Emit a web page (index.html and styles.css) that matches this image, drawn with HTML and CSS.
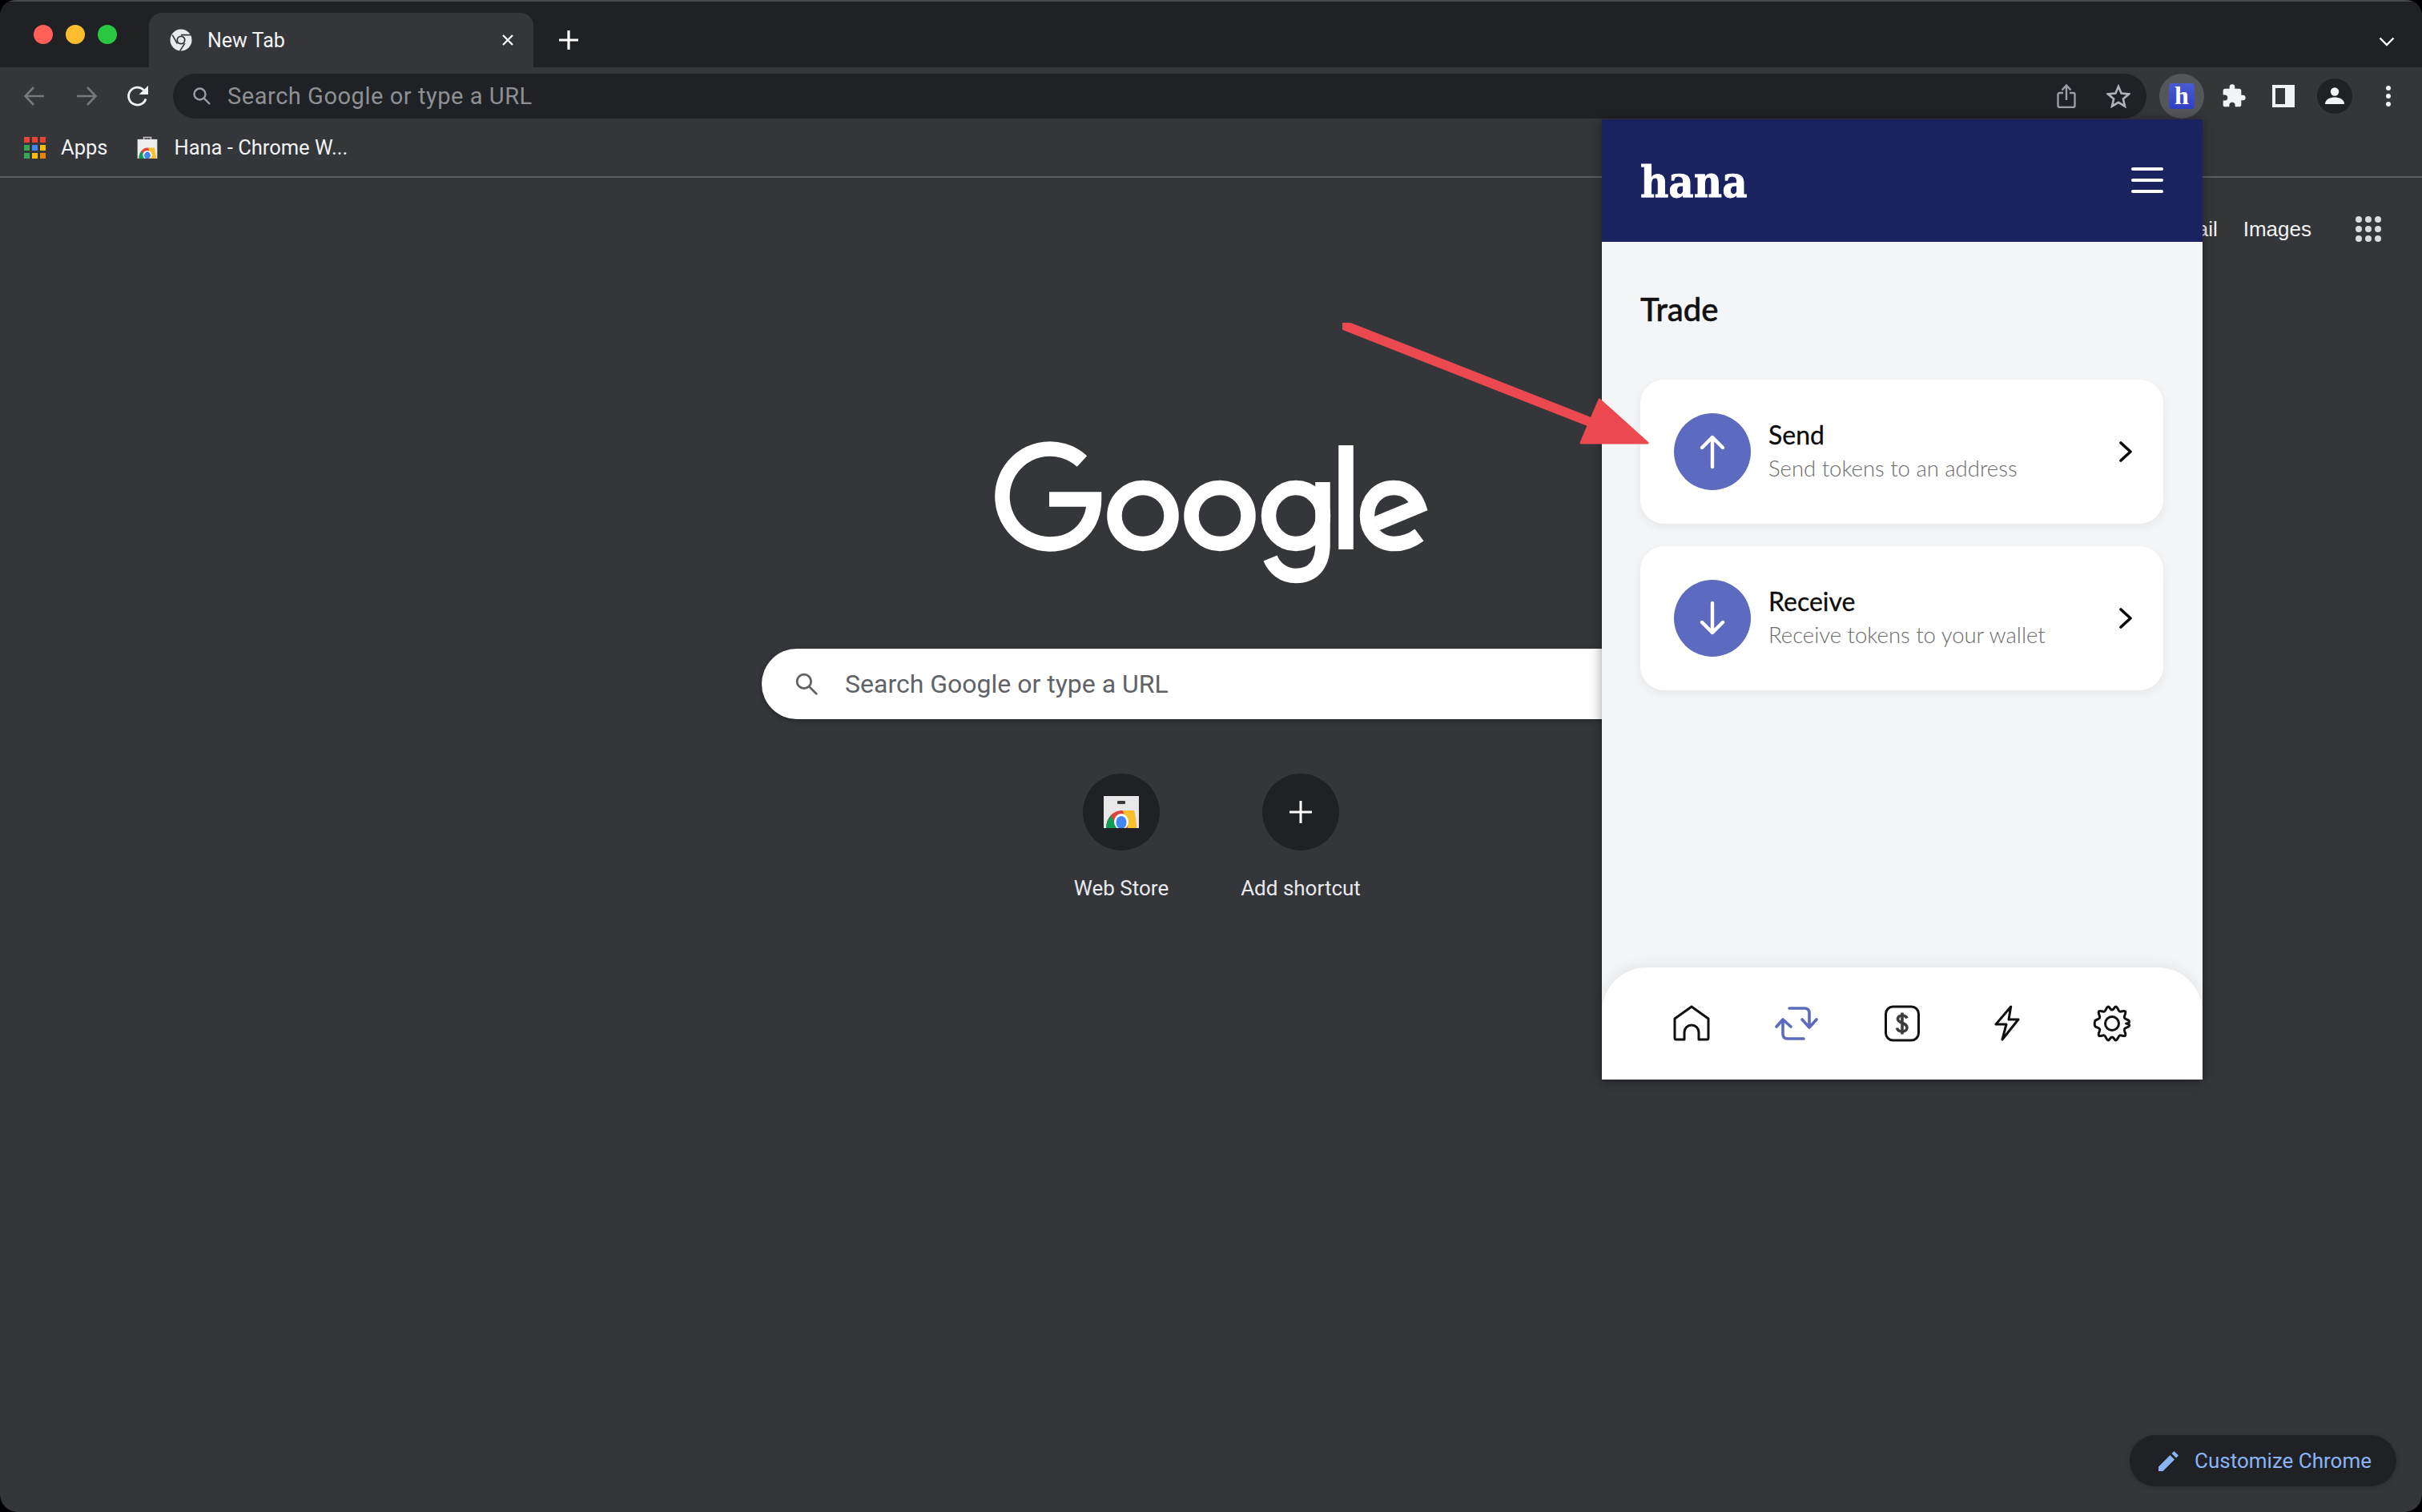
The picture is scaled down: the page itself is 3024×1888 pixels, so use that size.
FILE: index.html
```html
<!DOCTYPE html>
<html lang="en">
<head>
<meta charset="utf-8">
<title>New Tab</title>
<link rel="stylesheet" href="styles.css">
</head>
<body>
<div class="window">
  <header class="tabstrip">
    <div class="lights"><span class="light red"></span><span class="light yellow"></span><span class="light green"></span></div>
    <div class="tab">
      <svg class="tab-icon" viewBox="0 0 28 28"><circle cx="14" cy="14" r="13.5" fill="#e8eaed"/><circle cx="14" cy="14" r="5.6" fill="#35363a"/><circle cx="14" cy="14" r="3.8" fill="#e8eaed"/><path d="M14 7.6H26M9.4 18.6 3.2 7.6M18.8 18 12.6 27.6" stroke="#35363a" stroke-width="1.6" fill="none"/></svg>
      <span class="tab-title">New Tab</span>
      <svg class="tab-close" viewBox="0 0 16 16"><path d="M2 2 14 14M14 2 2 14" stroke="#fff" stroke-width="2.2"/></svg>
    </div>
    <svg class="new-tab" viewBox="0 0 24 24"><path d="M12 0V24M0 12H24" stroke="#fff" stroke-width="3.2"/></svg>
    <svg class="tab-menu" viewBox="0 0 20 12"><path d="M1.5 1.5 10 10 18.5 1.5" fill="none" stroke="#fff" stroke-width="2.4"/></svg>
  </header>
  <div class="toolbar">
    <svg class="nav-ico" viewBox="0 0 28 28"><path d="M26 14H3M13 3 2.5 14 13 25" fill="none" stroke="#77787b" stroke-width="2.6"/></svg>
    <svg class="nav-ico" viewBox="0 0 28 28"><path d="M2 14H25M15 3 25.5 14 15 25" fill="none" stroke="#77787b" stroke-width="2.6"/></svg>
    <svg class="nav-ico" viewBox="0 0 28 28"><path d="M24 17.5A11 11 0 1 1 21.5 6.5" fill="none" stroke="#f1f3f4" stroke-width="2.8"/><path d="M15.5 12H27V1Z" fill="#f1f3f4"/></svg>
    <div class="omnibox">
      <svg class="omni-search" viewBox="0 0 24 24"><circle cx="9.5" cy="9.5" r="7" fill="none" stroke="#9aa0a6" stroke-width="2.4"/><path d="M14.5 14.5 22 22" stroke="#9aa0a6" stroke-width="2.4"/></svg>
      <span class="omni-text">Search Google or type a URL</span>
      <svg class="omni-share" viewBox="0 0 24 30"><path d="M8 11H3.5A2 2 0 0 0 1.5 13V27A2 2 0 0 0 3.5 29H20.5A2 2 0 0 0 22.5 27V13A2 2 0 0 0 20.5 11H16" fill="none" stroke="#9aa0a6" stroke-width="2.4"/><path d="M12 20V2M6.5 7.5 12 1.5 17.5 7.5" fill="none" stroke="#9aa0a6" stroke-width="2.4"/></svg>
      <svg class="omni-star" viewBox="0 0 30 30"><path d="M15 3 18.6 11.6 28 12.4 20.9 18.5 23 27.7 15 22.8 7 27.7 9.1 18.5 2 12.4 11.4 11.6Z" fill="none" stroke="#b0b3b8" stroke-width="2.6"/></svg>
    </div>
    <div class="ext-btn"><span class="ext-h">h</span></div>
    <svg class="puzzle" viewBox="0 0 24 24"><path d="M20.5 11H19V7a2 2 0 0 0-2-2h-4V3.5a2.5 2.5 0 0 0-5 0V5H4a2 2 0 0 0-2 2v3.8h1.5a2.7 2.7 0 0 1 0 5.4H2V20a2 2 0 0 0 2 2h3.8v-1.5a2.7 2.7 0 0 1 5.4 0V22H17a2 2 0 0 0 2-2v-4h1.5a2.5 2.5 0 0 0 0-5z" fill="#f1f3f4"/></svg>
    <div class="panel-ico"><span class="panel-hole"></span></div>
    <div class="avatar"><svg viewBox="0 0 24 24"><circle cx="12" cy="6.5" r="5.2" fill="#f1f3f4"/><path d="M0 22C0 15.5 7 13.5 12 13.5S24 15.5 24 22Z" fill="#f1f3f4"/></svg></div>
    <div class="kebab"><span></span><span></span><span></span></div>
  </div>
  <nav class="bookmarks">
    <svg class="bm-apps" viewBox="0 0 27 27"><g fill="#ea4335"><rect width="7" height="7"/><rect x="10" width="7" height="7"/><rect x="20" width="7" height="7"/></g><rect y="10" width="7" height="7" fill="#34a853"/><rect x="10" y="10" width="7" height="7" fill="#4285f4"/><rect x="20" y="10" width="7" height="7" fill="#fbbc04"/><rect y="20" width="7" height="7" fill="#34a853"/><rect x="10" y="20" width="7" height="7" fill="#fbbc04"/><rect x="20" y="20" width="7" height="7" fill="#ea8600"/></svg>
    <span class="bm-label apps-label">Apps</span>
    <svg class="bm-store" viewBox="0 0 44 50"><path d="M14 8V3H30V8" fill="none" stroke="#bdbdbd" stroke-width="3"/><rect y="7" width="44" height="43" fill="#eeeeee"/><path d="M3 50A19 24 0 0 1 41 50Z" fill="#db4437"/><path d="M3 50A19 24 0 0 1 9 33L17 50Z" fill="#0f9d58"/><path d="M24 26H38Q41 38 41 50H30Z" fill="#fbc02d"/><ellipse cx="22" cy="42" rx="10" ry="10" fill="#fff"/><ellipse cx="22" cy="43" rx="7" ry="8" fill="#4285f4"/></svg>
    <span class="bm-label">Hana - Chrome W...</span>
  </nav>
  <main class="ntp">
    <div class="ntp-links"><span class="ntp-link gmail">Gmail</span><span class="ntp-link">Images</span>
      <div class="grid-dots"><span></span><span></span><span></span><span></span><span></span><span></span><span></span><span></span><span></span></div>
    </div>
    <svg class="logo" viewBox="1230 540 560 200" role="img" aria-label="Google">
      <g fill="none" stroke="#fff" stroke-width="18.5">
        <path d="M1351 576A59.5 59.5 0 1 0 1310 679.5C1345 679.5 1366 655 1366 623.5H1310"/>
        <ellipse cx="1427" cy="644" rx="35.5" ry="35"/>
        <ellipse cx="1523" cy="644" rx="35.5" ry="35"/>
        <ellipse cx="1618" cy="644" rx="34" ry="35"/>
        <path d="M1651.5 602V680C1651.5 706 1638 719 1618 719C1602 719 1591 709 1586 697"/>
        <path d="M1680.5 556V686"/>
        <path d="M1772 668C1764 674 1754 679 1741 679C1720 679 1707 663 1707 644C1707 624 1721 609 1740 609C1757 609 1767 620 1771 632L1718 654"/>
      </g>
    </svg>
    <div class="searchbox">
      <svg class="sb-icon" viewBox="0 0 24 24"><circle cx="9.5" cy="9.5" r="7" fill="none" stroke="#5f6368" stroke-width="2.2"/><path d="M14.5 14.5 22.5 22.5" stroke="#5f6368" stroke-width="2.2"/></svg>
      <span class="sb-text">Search Google or type a URL</span>
    </div>
    <div class="shortcuts">
      <div class="shortcut">
        <div class="sc-circle"><svg class="sc-store" viewBox="0 0 44 40"><rect width="44" height="40" fill="#e8e8e8"/><rect x="17" y="6" width="10" height="4" rx="1" fill="#3c3c3c"/><path d="M3 40A19 22 0 0 1 41 40Z" fill="#db4437"/><path d="M3 40A19 22 0 0 1 9 24L17 40Z" fill="#0f9d58"/><path d="M24 18H38Q41 28 41 40H30Z" fill="#fbc02d"/><ellipse cx="22" cy="32" rx="9" ry="10" fill="#fff"/><ellipse cx="22" cy="33" rx="6.5" ry="8" fill="#4285f4"/></svg></div>
        <span class="sc-label">Web Store</span>
      </div>
      <div class="shortcut">
        <div class="sc-circle"><svg class="sc-plus" viewBox="0 0 28 28"><path d="M14 0V28M0 14H28" stroke="#fff" stroke-width="3"/></svg></div>
        <span class="sc-label">Add shortcut</span>
      </div>
    </div>
    <div class="customize">
      <svg class="pencil" viewBox="0 0 25 25"><path d="M0 19.5 14.5 5 20 10.5 5.5 25H0ZM16.5 3 19.5 0 25 5.5 22 8.5Z" fill="#8ab4f8"/></svg>
      <span>Customize Chrome</span>
    </div>
  </main>
</div>

<section class="popup">
  <header class="popup-head">
    <span class="brand">hana</span>
    <div class="burger"><span></span><span></span><span></span></div>
  </header>
  <div class="popup-body">
    <h1 class="trade">Trade</h1>
    <div class="cards">
      <div class="card">
        <div class="card-circle"><svg viewBox="0 0 34 44"><path d="M17 41V4M4 17 17 4 30 17" fill="none" stroke="#fff" stroke-width="4.4" stroke-linecap="round" stroke-linejoin="round"/></svg></div>
        <div class="card-text"><span class="card-title">Send</span><span class="card-sub">Send tokens to an address</span></div>
        <svg class="chev" viewBox="0 0 16 26"><path d="M2 2 14 13 2 24" fill="none" stroke="#0b0b0b" stroke-width="3.6" stroke-linecap="round" stroke-linejoin="round"/></svg>
      </div>
      <div class="card">
        <div class="card-circle"><svg viewBox="0 0 34 44"><path d="M17 3V40M4 27 17 40 30 27" fill="none" stroke="#fff" stroke-width="4.4" stroke-linecap="round" stroke-linejoin="round"/></svg></div>
        <div class="card-text"><span class="card-title">Receive</span><span class="card-sub">Receive tokens to your wallet</span></div>
        <svg class="chev" viewBox="0 0 16 26"><path d="M2 2 14 13 2 24" fill="none" stroke="#0b0b0b" stroke-width="3.6" stroke-linecap="round" stroke-linejoin="round"/></svg>
      </div>
    </div>
  </div>
  <footer class="tabbar">
    <svg class="tb-ico" viewBox="0 0 48 48"><path d="M24 3 45 18V42Q45 44 43 44H33V35A9 9 0 0 0 15 35V44H5Q3 44 3 42V18Z" fill="none" stroke="#111" stroke-width="3" stroke-linejoin="round"/></svg>
    <svg class="tb-swap" viewBox="0 0 56 48"><path d="M19 5H38Q44 5 44 11V29M35 19 44 29 53 19M37 43H17Q11 43 11 37V19M3 28 11 19 21 28" fill="none" stroke="#5c6bc0" stroke-width="3.6" stroke-linecap="round" stroke-linejoin="round"/></svg>
    <svg class="tb-ico" viewBox="0 0 48 48"><rect x="3.5" y="3" width="41" height="42" rx="9" fill="none" stroke="#111" stroke-width="3"/><path d="M30 17.5C29 15 27 14 24 14 20.5 14 18.5 16 18.5 18.5 18.5 24 30 22.5 30 29 30 32 27.5 34 24 34 20.5 34 18 32 17.5 29.5M24 10.5V37.5" fill="none" stroke="#3c3c3c" stroke-width="3.6"/></svg>
    <svg class="tb-ico" viewBox="0 0 48 48"><path d="M28.7 3 10 25H23L18 44 38 19H26Z" fill="none" stroke="#111" stroke-width="3" stroke-linejoin="round"/></svg>
    <svg class="tb-ico" viewBox="0 0 48 48"><circle cx="24" cy="24" r="8.5" fill="none" stroke="#111" stroke-width="3"/><path d="M19.5 3C21 3 21.5 7 24 7S27 3 28.5 3C31 3 31.5 8 33.5 9S39 7 40.5 9C42 11 38.5 14.5 39.5 17S45 18.5 45.5 21.5C46 24 41.5 24 41.5 24S46 24.5 45.5 26.5C45 29.5 40.5 28.5 39.5 31S42 37 40.5 39C39 41 35.5 38 33.5 39S31 45 28.5 45C27 45 26.5 41 24 41S21 45 19.5 45C17 45 16.5 40 14.5 39S9 41 7.5 39C6 37 9.5 33.5 8.5 31S3 29.5 2.5 26.5C2 24.5 2 23.5 2.5 21.5C3 18.5 7.5 19.5 8.5 17S6 11 7.5 9C9 7 12.5 10 14.5 9S17 3 19.5 3Z" fill="none" stroke="#111" stroke-width="3" stroke-linejoin="round"/></svg>
  </footer>
</section>

<svg class="arrow" viewBox="0 0 400 170"><path d="M4 4 317 127" stroke="#ec4850" stroke-width="12" stroke-linecap="round"/><path d="M321 96 381 150 298 150Z" fill="#ec4850" stroke="#ec4850" stroke-width="3" stroke-linejoin="round"/></svg>
</body>
</html>
```
FILE: styles.css
```css
* { box-sizing: border-box; }
html, body { margin: 0; padding: 0; background: #000; }
body { width: 3024px; height: 1888px; overflow: hidden; position: relative; font-family: Roboto, "Liberation Sans", sans-serif; }
.window { width: 3024px; height: 1888px; display: flex; flex-direction: column; background: #35363a; border-radius: 20px 20px 22px 22px; overflow: hidden; }

.tabstrip { height: 84px; flex: none; background: #202124; border-top: 2px solid #46474b; display: flex; align-items: flex-start; padding: 14px 34px 0 42px; }
.lights { display: flex; gap: 16px; width: 144px; padding-top: 15px; flex: none; }
.light { width: 24px; height: 24px; border-radius: 50%; }
.red { background: #ff5f57; } .yellow { background: #febc2e; } .green { background: #28c840; }
.tab { width: 480px; height: 68px; background: #35363a; border-radius: 16px 16px 0 0; display: flex; align-items: center; padding: 0 24px 0 26px; flex: none; }
.tab-icon { width: 28px; height: 28px; margin-right: 19px; }
.tab-title { color: #f1f3f4; font-size: 25px; flex: 1; }
.tab-close { width: 16px; height: 16px; }
.new-tab { width: 24px; height: 24px; margin: 22px 0 0 32px; }
.tab-menu { width: 20px; height: 12px; margin: 30px 0 0 auto; }

.toolbar { height: 72px; flex: none; display: flex; align-items: center; padding: 0 30px 0 29px; }
.nav-ico { width: 28px; height: 28px; margin-right: 37px; flex: none; }
.nav-ico:nth-child(2) { margin-right: 36px; }
.nav-ico:nth-child(3) { margin-right: 30px; }
.omnibox { width: 2464px; height: 56px; background: #202124; border-radius: 28px; display: flex; align-items: center; padding: 0 20px 0 24px; flex: none; }
.omni-search { width: 24px; height: 24px; margin-right: 20px; }
.omni-text { color: #8e9094; font-size: 29px; letter-spacing: .55px; flex: 1; }
.omni-share { width: 24px; height: 30px; margin-right: 38px; }
.omni-star { width: 30px; height: 30px; }
.ext-btn { width: 56px; height: 56px; border-radius: 50%; background: #55565a; display: flex; align-items: center; justify-content: center; margin-left: 16px; flex: none; }
.ext-h { width: 32px; height: 32px; border-radius: 4px; background: linear-gradient(#4a5bd0, #3040c4); color: #fff; font: bold 32px/30px "Liberation Serif", serif; text-align: center; }
.puzzle { width: 32px; height: 32px; margin-left: 21px; flex: none; }
.panel-ico { width: 28px; height: 28px; margin-left: 32px; background: #f1f3f4; padding: 4px 12px 4px 4px; flex: none; }
.panel-hole { display: block; height: 100%; background: #35363a; }
.avatar { width: 44px; height: 44px; border-radius: 50%; background: #202124; margin-left: 28px; display: flex; align-items: center; justify-content: center; flex: none; }
.avatar svg { width: 24px; height: 24px; }
.kebab { margin-left: 42px; display: flex; flex-direction: column; gap: 4px; flex: none; }
.kebab span { width: 6px; height: 6px; border-radius: 50%; background: #f1f3f4; }

.bookmarks { height: 66px; flex: none; display: flex; align-items: center; padding: 0 0 8px 30px; border-bottom: 2px solid #5d5e62; }
.bm-apps { width: 27px; height: 27px; margin-right: 19px; }
.bm-store { width: 26px; height: 28px; margin-right: 20px; }
.bm-label { color: #f1f3f4; font-size: 25.5px; }
.apps-label { margin-right: 37px; }

.ntp { flex: 1; display: flex; flex-direction: column; align-items: center; position: relative; }
.ntp-links { align-self: stretch; display: flex; justify-content: flex-end; align-items: center; height: 66px; margin-top: 31px; padding-right: 51px; }
.ntp-link { color: #f1f3f4; font: 26px "Liberation Sans", sans-serif; }
.gmail { margin-right: 32px; }
.grid-dots { display: grid; grid-template-columns: repeat(3, 8px); gap: 4px; margin-left: 55px; }
.grid-dots span { width: 8px; height: 8px; border-radius: 50%; background: #dadce0; }
.logo { width: 560px; height: 200px; margin: 221px 0 0 -4px; flex: none; }
.searchbox { width: 1120px; height: 88px; margin: 70px 0 0 -2px; border-radius: 44px; background: #fff; display: flex; align-items: center; padding-left: 41px; box-shadow: 0 2px 6px rgba(0,0,0,.28); flex: none; }
.sb-icon { width: 30px; height: 30px; margin-right: 33px; }
.sb-text { color: #5f6368; font-size: 32px; }
.shortcuts { display: flex; gap: 48px; margin-top: 68px; }
.shortcut { width: 176px; display: flex; flex-direction: column; align-items: center; }
.sc-circle { width: 96px; height: 96px; border-radius: 50%; background: #202124; display: flex; align-items: center; justify-content: center; }
.sc-store { width: 44px; height: 40px; }
.sc-plus { width: 28px; height: 28px; }
.sc-label { color: #e8eaed; font-size: 26px; margin-top: 32px; white-space: nowrap; }
.customize { position: absolute; right: 32px; bottom: 32px; height: 64px; width: 333px; border-radius: 32px; background: #202124; display: flex; align-items: center; padding-left: 36px; gap: 20px; color: #8ab4f8; font-size: 26px; box-shadow: 0 1px 6px rgba(0,0,0,.2); }
.pencil { width: 25px; height: 25px; }

.popup { position: absolute; left: 2000px; top: 149px; width: 750px; height: 1199px; background: #f4f5f7; display: flex; flex-direction: column; box-shadow: 0 2px 14px rgba(0,0,0,.4); }
.popup-head { height: 153px; flex: none; background: #1a2360; display: flex; align-items: center; justify-content: space-between; padding: 0 49px 0 48px; }
.brand { color: #fff; font: bold 54px/1 "DejaVu Serif Condensed", "DejaVu Serif", serif; font-stretch: condensed; -webkit-text-stroke: .8px #fff; margin-top: 2px; }
.burger { display: flex; flex-direction: column; gap: 10px; margin-top: -2px; }
.burger span { width: 40px; height: 4px; border-radius: 2px; background: #fff; }
.popup-body { flex: 1; padding: 57px 49px 0 48px; }
.trade { margin: 0; font: 500 40px/54px Lato, sans-serif; -webkit-text-stroke: .5px #111; color: #111; }
.cards { display: flex; flex-direction: column; gap: 28px; margin-top: 61px; }
.card { height: 180px; background: #fff; border-radius: 30px; display: flex; align-items: center; padding: 0 39px 0 42px; box-shadow: 0 4px 12px rgba(0,0,0,.06); }
.card-circle { width: 96px; height: 96px; border-radius: 50%; background: #5c6bc0; display: flex; align-items: center; justify-content: center; flex: none; }
.card-circle svg { width: 34px; height: 44px; }
.card-text { flex: 1; display: flex; flex-direction: column; margin-left: 22px; }
.card-title { font: 400 32px/40px Lato, sans-serif; -webkit-text-stroke: .3px #0b0b0b; color: #0b0b0b; margin-top: -2px; }
.card-sub { font: 300 27.5px/38px Lato, sans-serif; color: #6c6c6c; margin-top: 3px; }
.chev { width: 16px; height: 26px; flex: none; }
.tabbar { height: 140px; flex: none; background: #fff; border-radius: 56px 56px 0 0; display: flex; align-items: center; justify-content: space-between; padding: 0 89px 0 88px; box-shadow: 0 -6px 14px rgba(0,0,0,.05); }
.tb-ico { width: 48px; height: 48px; }
.tb-swap { width: 56px; height: 48px; margin: 0 -4px; }

.arrow { position: absolute; left: 1676px; top: 403px; width: 400px; height: 170px; }
```
